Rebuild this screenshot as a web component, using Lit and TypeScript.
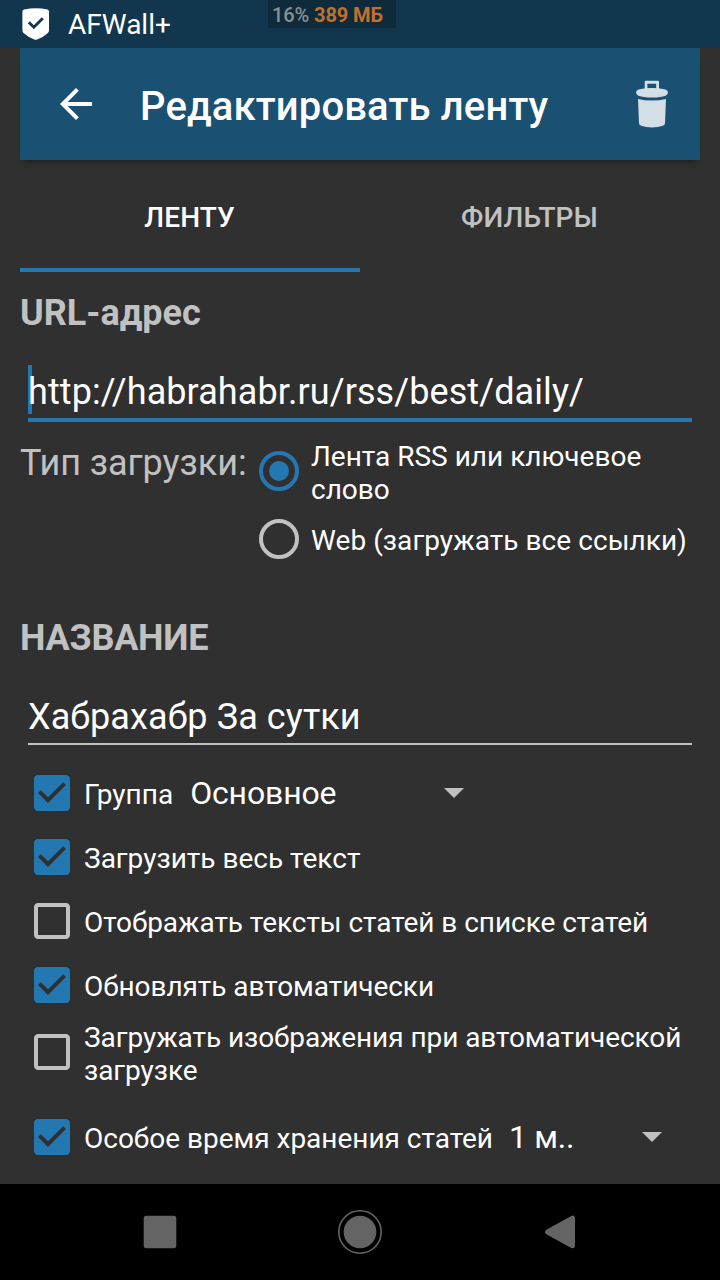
import { LitElement, html, css, svg, nothing } from "lit";
import { customElement, property } from "lit/decorators.js";

@customElement("check-box")
class CheckBox extends LitElement {
  @property({ type: Boolean }) checked = false;

  static styles = css`
    :host { display: block; width: 36px; height: 36px; flex: none; }
    svg { display: block; width: 36px; height: 36px; }
    .on { fill: #2478b1; }
    .off { fill: #c1c1c1; }
  `;

  render() {
    return html`<svg viewBox="3 3 18 18">
      ${this.checked
        ? svg`<path class="on" d="M19 3H5c-1.11 0-2 .9-2 2v14c0 1.1.89 2 2 2h14c1.11 0 2-.9 2-2V5c0-1.1-.89-2-2-2zm-9 14l-5-5 1.41-1.41L10 14.17l7.59-7.59L19 8l-9 9z"/>`
        : svg`<path class="off" d="M19 5v14H5V5h14m0-2H5c-1.1 0-2 .9-2 2v14c0 1.1.9 2 2 2h14c1.1 0 2-.9 2-2V5c0-1.1-.9-2-2-2z"/>`}
    </svg>`;
  }
}

@customElement("radio-button")
class RadioButton extends LitElement {
  @property({ type: Boolean }) checked = false;

  static styles = css`
    :host { display: block; width: 40px; height: 40px; flex: none; }
    svg { display: block; }
    .ring { fill: none; stroke: #c1c1c1; stroke-width: 4; }
    .ring.on { stroke: #2478b1; }
    .dot { fill: #2478b1; }
  `;

  render() {
    return html`<svg width="40" height="40" viewBox="0 0 40 40">
      <circle class="ring ${this.checked ? "on" : ""}" cx="20" cy="20" r="18"></circle>
      ${this.checked ? svg`<circle class="dot" cx="20" cy="20" r="10"/>` : nothing}
    </svg>`;
  }
}

interface Option {
  label: string;
  checked: boolean;
  value?: string;
  kind?: string;
}

const OPTIONS: Option[] = [
  { label: "Группа", checked: true, value: "Основное", kind: "group" },
  { label: "Загрузить весь текст", checked: true, kind: "plain" },
  { label: "Отображать тексты статей в списке статей", checked: false },
  { label: "Обновлять автоматически", checked: true },
  { label: "Загружать изображения при автоматической загрузке", checked: false, kind: "tall" },
  { label: "Особое время хранения статей", checked: true, value: "1 м..", kind: "keep" },
];

@customElement("app-root")
class AppRoot extends LitElement {
  static styles = css`
    :host {
      display: flex;
      flex-direction: column;
      width: 720px;
      height: 1280px;
      overflow: hidden;
      background: #303030;
      color: #fff;
      font-family: Roboto, sans-serif;
      font-size: 28px;
      line-height: 33px;
    }
    * { box-sizing: border-box; }
    svg { display: block; flex: none; }
    .status {
      position: relative;
      display: flex;
      align-items: center;
      height: 48px;
      flex: none;
      padding-left: 22px;
      gap: 18px;
      background: #11364d;
    }
    .memory {
      position: absolute;
      left: 268px;
      top: 0;
      width: 128px;
      height: 28px;
      padding: 2px 0 0 4px;
      background: #0e2a3b;
      color: #c2702d;
      font-size: 20px;
      line-height: 26px;
      font-weight: 700;
      letter-spacing: -0.1px;
      white-space: nowrap;
    }
    .percent { color: #8c8f91; font-weight: 500; }
    .bar {
      display: flex;
      align-items: center;
      height: 112px;
      flex: none;
      margin: 0 20px;
      padding: 0 30px 0 40px;
      background: #1a5072;
      box-shadow: 0 5px 6px -3px rgba(0, 0, 0, 0.35);
    }
    .title {
      flex: 1;
      margin: 6px 0 0 48px;
      font-size: 40px;
      line-height: 48px;
      font-weight: 500;
      letter-spacing: 0.14px;
    }
    .tabs {
      display: grid;
      grid-template-columns: 1fr 1fr;
      height: 112px;
      flex: none;
      margin: 0 20px;
    }
    .tab {
      display: flex;
      align-items: center;
      justify-content: center;
      padding: 6px 1px 0 0;
      font-weight: 500;
      letter-spacing: 0.15px;
      color: #c1c1c1;
      border-bottom: 4px solid transparent;
    }
    .tab.active { color: #fff; border-color: #2478b1; }
    .form { flex: 1; padding: 20px 20px 0; }
    .heading {
      height: 42px;
      font-size: 36px;
      line-height: 42px;
      font-weight: 700;
      color: #c1c1c1;
    }
    .heading.caps { letter-spacing: -0.25px; }
    .field {
      position: relative;
      margin: 31px 8px 0;
      padding-top: 6px;
      height: 57px;
      font-size: 36px;
      line-height: 42px;
      letter-spacing: 0.09px;
      border-bottom: 4px solid #2478b1;
    }
    .cursor {
      position: absolute;
      left: 0;
      top: 0;
      width: 4px;
      height: 49px;
      background: #2478b1;
    }
    .text { position: relative; }
    .field.idle { height: 55px; border-bottom: 2px solid #c1c1c1; }
    .type { display: flex; height: 195px; }
    .type-label {
      width: 239px;
      flex: none;
      padding-top: 20px;
      font-size: 36px;
      line-height: 42px;
      letter-spacing: -0.06px;
      color: #c1c1c1;
    }
    .radios { flex: 1; padding-top: 18px; }
    .radio { display: flex; gap: 12px; height: 66px; }
    .radio radio-button { margin-top: 11px; }
    .radio + .radio { margin-top: 13px; }
    .radio + .radio radio-button { margin-top: 0; }
    .radio + .radio .radio-text { margin-top: 5px; letter-spacing: 0.06px; }
    .radio-text { flex: 1; white-space: nowrap; }
    .options { padding-top: 16px; }
    .option {
      display: flex;
      align-items: center;
      height: 64px;
      padding-left: 14px;
    }
    .option-label { margin-left: 14px; padding-top: 3px; letter-spacing: -0.05px; }
    .plain .option-label, .group .option-label { letter-spacing: 0; }
    .tall { height: 70px; }
    .tall .option-label { width: 610px; padding-top: 4px; letter-spacing: -0.06px; }
    .keep { margin-top: 18px; }
    .keep .option-label { letter-spacing: -0.02px; }
    .select {
      display: flex;
      align-items: center;
      justify-content: space-between;
      margin-left: 17px;
      width: 274px;
      font-size: 32px;
      line-height: 38px;
      letter-spacing: -0.15px;
    }
    .keep .select { margin-left: 16px; width: 153px; letter-spacing: -0.3px; }
    .nav {
      display: grid;
      grid-template-columns: repeat(3, 200px);
      justify-content: center;
      justify-items: center;
      align-items: center;
      height: 96px;
      flex: none;
      background: #000;
    }
  `;

  private caret() {
    return html`<svg width="20" height="10" viewBox="0 0 20 10"><path fill="#c1c1c1" d="M0 0h20L10 10z"/></svg>`;
  }

  render() {
    return html`
      <div class="status">
        <svg width="28" height="32" viewBox="0 0 28 32">
          <path fill="#fff" d="M0.4 3.8Q0.4 2.2 2 1.6Q8 0.300 13.700 0.300Q20 0.300 25.400 1.600Q27 2.200 27 3.800V22.300Q27 24 25.900 25Q20.500 30 15 31.500Q13.700 32 12.400 31.500Q6.500 29.500 1.500 25Q0.400 24 0.400 22.300z"/>
          <path fill="none" stroke="#11364d" stroke-width="2.800" d="M6.800 14.200L11.800 19.200L20.800 10.200"/>
        </svg>
        <span>AFWall+</span>
        <div class="memory"><span class="percent">16%</span> 389 МБ</div>
      </div>
      <div class="bar">
        <svg width="32" height="32" viewBox="4 4 16 16"><path fill="#fff" d="M20 11H7.830l5.590-5.590L12 4l-8 8 8 8 1.410-1.410L7.830 13H20v-2z"/></svg>
        <div class="title">Редактировать ленту</div>
        <svg width="36" height="48" viewBox="0 0 36 48">
          <g fill="#d3dee5">
            <path fill-rule="evenodd" d="M12 0.700H23.700Q25 0.700 25 2V9H10.700V2Q10.700 0.700 12 0.700zM13.400 3.800V8.200H22.200V3.800z"/>
            <path d="M2 12.500Q2 10.600 4.500 9.600Q9 8 18 8Q27 8 31.500 9.600Q34 10.600 34 12.500Q34 14.600 31.500 15.700Q27 17.500 18 17.500Q9 17.500 4.500 15.700Q2 14.600 2 12.500z"/>
            <path d="M4 19Q10 20.500 18 20.500Q26 20.500 32 19L31 43.500Q31 45 28 46Q24 47.400 18 47.400Q12 47.400 8 46Q5 45 5 43.500z"/>
          </g>
        </svg>
      </div>
      <div class="tabs">
        <div class="tab active">ЛЕНТУ</div>
        <div class="tab">ФИЛЬТРЫ</div>
      </div>
      <div class="form">
        <div class="heading">URL-адрес</div>
        <div class="field">
          <span class="cursor"></span>
          <span class="text">http://habrahabr.ru/rss/best/daily/</span>
        </div>
        <div class="type">
          <div class="type-label">Тип загрузки:</div>
          <div class="radios">
            <div class="radio">
              <radio-button checked></radio-button>
              <div class="radio-text">Лента RSS или ключевое<br />слово</div>
            </div>
            <div class="radio">
              <radio-button></radio-button>
              <div class="radio-text">Web (загружать все ссылки)</div>
            </div>
          </div>
        </div>
        <div class="heading caps">НАЗВАНИЕ</div>
        <div class="field idle"><span class="text">Хабрахабр За сутки</span></div>
        <div class="options">
          ${OPTIONS.map(
            (o) => html`<div class="option ${o.kind ?? ""}">
              <check-box ?checked=${o.checked}></check-box>
              <span class="option-label">${o.label}</span>
              ${o.value ? html`<div class="select"><span>${o.value}</span>${this.caret()}</div>` : nothing}
            </div>`
          )}
        </div>
      </div>
      <div class="nav">
        <svg width="34" height="34" viewBox="0 0 34 34"><rect x="0.700" y="0.700" width="32.600" height="32.600" rx="2.500" fill="#646464"/></svg>
        <svg width="44" height="44" viewBox="0 0 44 44">
          <circle cx="22" cy="22" r="21.200" fill="none" stroke="#646464" stroke-width="1.600"/>
          <circle cx="22" cy="22" r="16.300" fill="#646464"/>
        </svg>
        <svg width="32" height="34" viewBox="0 0 32 34"><path fill="#646464" stroke="#646464" stroke-width="5" stroke-linejoin="round" d="M3.500 17L28.500 3.200V30.800z"/></svg>
      </div>
    `;
  }
}
